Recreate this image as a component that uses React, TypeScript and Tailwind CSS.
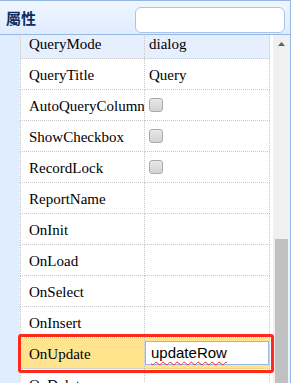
import React from 'react'

type Row = { name: string; value?: string; kind?: 'text' | 'check' | 'edit' }

const rows: Row[] = [
  { name: 'QueryTitle', value: 'Query' },
  { name: 'AutoQueryColumn', kind: 'check' },
  { name: 'ShowCheckbox', kind: 'check' },
  { name: 'RecordLock', kind: 'check' },
  { name: 'ReportName' },
  { name: 'OnInit' },
  { name: 'OnLoad' },
  { name: 'OnSelect' },
  { name: 'OnInsert' },
  { name: 'OnUpdate', value: 'updateRow', kind: 'edit' },
  { name: 'OnDelete' },
]

// Grey checkbox as drawn by the old property grid
function Check() {
  return (
    <span className="block w-[14px] h-[14px] rounded-[3px] border border-[#ababab] bg-gradient-to-b from-[#e8e8e8] to-[#d2d2d2]" />
  )
}

function PropRow({ row, active }: { row: Row; active?: boolean }) {
  const bg = row.kind === 'edit' ? 'bg-[#ffe48d]' : active ? 'bg-[#e6effe]' : 'bg-white'
  return (
    <div className={`flex h-[31px] shrink-0 ${bg}`}>
      <div className="w-[125px] shrink-0 flex items-center pl-[8px] pt-[2px] border-l border-r border-b border-dotted border-[#c8c8c8] whitespace-nowrap overflow-hidden">
        {row.name}
      </div>
      <div className="w-[125px] shrink-0 flex items-center pl-[4px] border-r border-b border-dotted border-[#c8c8c8]">
        {row.kind === 'check' && <Check />}
        {row.kind === 'edit' && (
          <div className="h-[24px] w-[124px] -ml-[4px] border border-[#95b8e7] bg-white flex items-center pl-[5px] font-['Liberation_Sans',Arial,sans-serif] text-[15px]">
            <span className="underline decoration-wavy decoration-[#e23] decoration-1 underline-offset-[3px]">{row.value}</span>
          </div>
        )}
        {!row.kind && <span className="pt-[2px]">{row.value}</span>}
      </div>
    </div>
  )
}

export default function App() {
  return (
    <div className="w-[293px] h-[383px] overflow-hidden bg-white relative font-['Liberation_Serif','Times_New_Roman',serif] text-[15px] text-black">
      <div className="w-[291px] h-full border-r border-[#95b8e7] flex flex-col">
        {/* Panel header */}
        <div className="h-[35px] shrink-0 border-t border-b border-[#95b8e7] bg-gradient-to-b from-[#f0f6ff] to-[#e0ecff] flex items-start justify-between pl-[6px] pr-[5px]">
          <span className="self-center font-bold text-[15px] text-[#0e2d5f] font-['Noto_Sans_CJK_TC','Noto_Sans_CJK_SC',sans-serif] leading-none">
            屬性
          </span>
          <div className="mt-[6px] w-[150px] h-[26px] rounded-[6px] border border-[#a9c5ee] bg-white" />
        </div>

        {/* Grid body */}
        <div className="flex-1 flex overflow-hidden">
          <div className="w-[20px] shrink-0 bg-[#e0ecff]" />
          <div className="w-[250px] shrink-0 flex flex-col overflow-hidden">
            <div className="-mt-[7px]">
              <PropRow row={{ name: 'QueryMode', value: 'dialog' }} active />
            </div>
            {rows.map((r) => (
              <PropRow key={r.name} row={r} />
            ))}
          </div>
          <div className="w-[3px] shrink-0" />
          {/* Scrollbar */}
          <div className="w-[17px] shrink-0 bg-[#f0f0f0] flex flex-col">
            <div className="h-[17px] flex items-center justify-center">
              <svg width="7" height="4" viewBox="0 0 7 4">
                <polygon points="0,4 3.5,0 7,4" fill="#606060" />
              </svg>
            </div>
            <div className="h-[187px]" />
            <div className="flex-1 ml-[2px] w-[13px] bg-[#c1c1c1]" />
          </div>
        </div>
      </div>

      {/* Red highlight around the edited row */}
      <div className="absolute left-[18px] top-[334px] w-[256px] h-[39px] border-[3px] border-[#ff2a1a] rounded-[3px]" />
    </div>
  )
}
